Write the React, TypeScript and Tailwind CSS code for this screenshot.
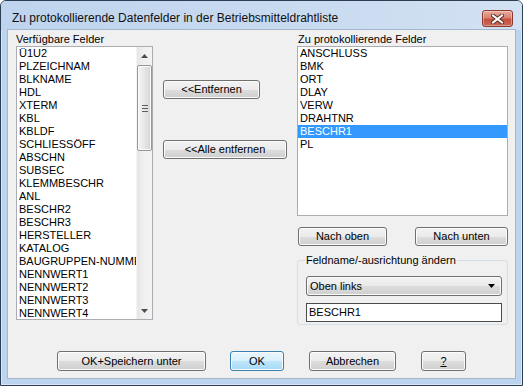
import type { ReactNode } from "react";

const available = [
  "Ü1U2",
  "PLZEICHNAM",
  "BLKNAME",
  "HDL",
  "XTERM",
  "KBL",
  "KBLDF",
  "SCHLIESSÖFF",
  "ABSCHN",
  "SUBSEC",
  "KLEMMBESCHR",
  "ANL",
  "BESCHR2",
  "BESCHR3",
  "HERSTELLER",
  "KATALOG",
  "BAUGRUPPEN-NUMMER",
  "NENNWERT1",
  "NENNWERT2",
  "NENNWERT3",
  "NENNWERT4",
];

const chosen = ["ANSCHLUSS", "BMK", "ORT", "DLAY", "VERW", "DRAHTNR", "BESCHR1", "PL"];

type BtnProps = { children: ReactNode; className?: string; primary?: boolean };

const Button = ({ children, className = "", primary = false }: BtnProps) => (
  <button
    className={`flex items-center justify-center rounded-[3px] border text-[11px] leading-none text-black shadow-[inset_0_0_0_1px_#fbfbfb] ${
      primary
        ? "border-[#3c7fb1] bg-[linear-gradient(#eaf6fd_0%,#d9f0fc_50%,#bee6fd_50%,#a7d9f5_100%)]"
        : "border-[#707070] bg-[linear-gradient(#f2f2f2_0%,#ebebeb_50%,#dddddd_50%,#cfcfcf_100%)]"
    } ${className}`}
  >
    {children}
  </button>
);

const Arrow = ({ down = false }: { down?: boolean }) => (
  <svg width="7" height="4" viewBox="0 0 7 4">
    <path d={down ? "M0 0 L7 0 L3.5 4Z" : "M0 4 L3.5 0 L7 4Z"} fill="#4d4d4d" />
  </svg>
);

const ScrollBar = () => (
  <div className="flex w-[16px] flex-col border-l border-[#f4f4f4] bg-[linear-gradient(90deg,#e6e6e6,#efefef_40%,#f3f3f3)]">
    <div className="flex h-[17px] items-center justify-center">
      <Arrow />
    </div>
    <div className="mt-[1px] flex h-[86px] items-center justify-center rounded-[2px] border border-[#979797] bg-[linear-gradient(90deg,#f5f5f5,#e6e6e6_50%,#d4d4d4)] shadow-[inset_0_0_0_1px_#fafafa]">
      <svg width="6" height="7" viewBox="0 0 6 7">
        <path d="M0 0.5H6M0 3.5H6M0 6.5H6" stroke="#5e5e5e" strokeWidth="1" />
      </svg>
    </div>
    <div className="flex-1" />
    <div className="flex h-[17px] items-center justify-center">
      <Arrow down />
    </div>
  </div>
);

export default function App() {
  return (
    <div className="flex h-[386px] w-[523px] flex-col overflow-hidden rounded-t-[6px] border border-[#2c3e52] bg-[#bdd4ee] font-['Liberation_Sans',Arial,sans-serif] text-black shadow-[inset_0_0_0_1px_rgba(255,255,255,0.45)]">
      {/* title bar */}
      <div className="flex h-[29px] items-start justify-between bg-[linear-gradient(90deg,#bed4ee,#c9dbf0_60%,#d3e2f3)] pl-[11px] pr-[9px]">
        <span className="mt-[9px] text-[12px] leading-[16px] text-[#111]">
          Zu protokollierende Datenfelder in der Betriebsmitteldrahtliste
        </span>
        <div className="mt-[9px] flex h-[17px] w-[31px] items-center justify-center rounded-[3px] border border-[#8b3a30] bg-[linear-gradient(#e9ab9d_0%,#d98372_45%,#c5503f_55%,#c86a56_100%)] shadow-[inset_0_0_0_1px_rgba(255,255,255,0.35)]">
          <svg width="13" height="10" viewBox="0 0 13 10">
            <path d="M2 1.5 L11 8.5 M11 1.5 L2 8.5" stroke="#5a2a24" strokeWidth="4" strokeLinecap="square" />
            <path d="M2 1.5 L11 8.5 M11 1.5 L2 8.5" stroke="#ffffff" strokeWidth="2" strokeLinecap="square" />
          </svg>
        </div>
      </div>

      {/* client area */}
      <div className="mx-[7px] flex h-[348px] flex-col bg-[#f0f0f0] text-[11px] shadow-[0_0_0_1px_#a3b7cc]">
        <div className="flex pl-[8px] pt-[3px]">
          {/* available */}
          <div className="flex w-[137px] flex-col">
            <div className="h-[13px] leading-[13px]">Verfügbare Felder</div>
            <div className="flex h-[274px] border border-[#abadb3] bg-white">
              <div className="min-w-0 flex-1 overflow-hidden">
                {available.map((f) => (
                  <div key={f} className="h-[13px] overflow-hidden whitespace-nowrap pl-[2px] leading-[13px]">
                    {f}
                  </div>
                ))}
              </div>
              <ScrollBar />
            </div>
          </div>

          {/* move buttons */}
          <div className="ml-[10px] flex w-[124px] flex-col items-start pt-[47px]">
            <Button className="h-[19px] w-[97px]">&lt;&lt;Entfernen</Button>
            <Button className="mt-[41px] h-[19px] w-[124px]">&lt;&lt;Alle entfernen</Button>
          </div>

          {/* chosen */}
          <div className="ml-[10px] flex w-[211px] flex-col">
            <div className="h-[13px] pl-[1px] leading-[13px]">Zu protokollierende Felder</div>
            <div className="h-[170px] border border-[#abadb3] bg-white">
              {chosen.map((f) => (
                <div
                  key={f}
                  className={`h-[13px] pl-[2px] leading-[13px] ${f === "BESCHR1" ? "bg-[#3399ff] text-white" : ""}`}
                >
                  {f}
                </div>
              ))}
            </div>
            <div className="mt-[11px] flex justify-between pl-[1px]">
              <Button className="h-[19px] w-[89px]">Nach oben</Button>
              <Button className="h-[19px] w-[93px]">Nach unten</Button>
            </div>
            <fieldset className="mt-[8px] rounded-[3px] border border-[#d5dfe5] pb-[2px] pl-[8px]">
              <legend className="-ml-[1px] px-[1px] leading-[13px]">Feldname/-ausrichtung ändern</legend>
              <div className="mt-[9px] flex h-[20px] w-[196px] items-center justify-between rounded-[3px] border border-[#707070] bg-[linear-gradient(#f2f2f2_0%,#ebebeb_50%,#dddddd_50%,#cfcfcf_100%)] pl-[3px] pr-[6px] shadow-[inset_0_0_0_1px_#fbfbfb]">
                <span>Oben links</span>
                <svg width="7" height="4" viewBox="0 0 7 4">
                  <path d="M0 0 L7 0 L3.5 4Z" fill="#000" />
                </svg>
              </div>
              <div className="mt-[7px] flex h-[19px] w-[196px] items-center border border-[#4a4a4a] bg-white pl-[2px]">
                BESCHR1
              </div>
            </fieldset>
          </div>
        </div>

        {/* dialog buttons */}
        <div className="mt-auto flex pb-[7px] pl-[49px]">
          <Button className="h-[20px] w-[149px]">OK+Speichern unter</Button>
          <Button primary className="ml-[24px] h-[20px] w-[54px]">
            OK
          </Button>
          <Button className="ml-[25px] h-[20px] w-[87px]">Abbrechen</Button>
          <Button className="ml-[25px] h-[20px] w-[45px]">
            <span className="underline">?</span>
          </Button>
        </div>
      </div>
    </div>
  );
}
